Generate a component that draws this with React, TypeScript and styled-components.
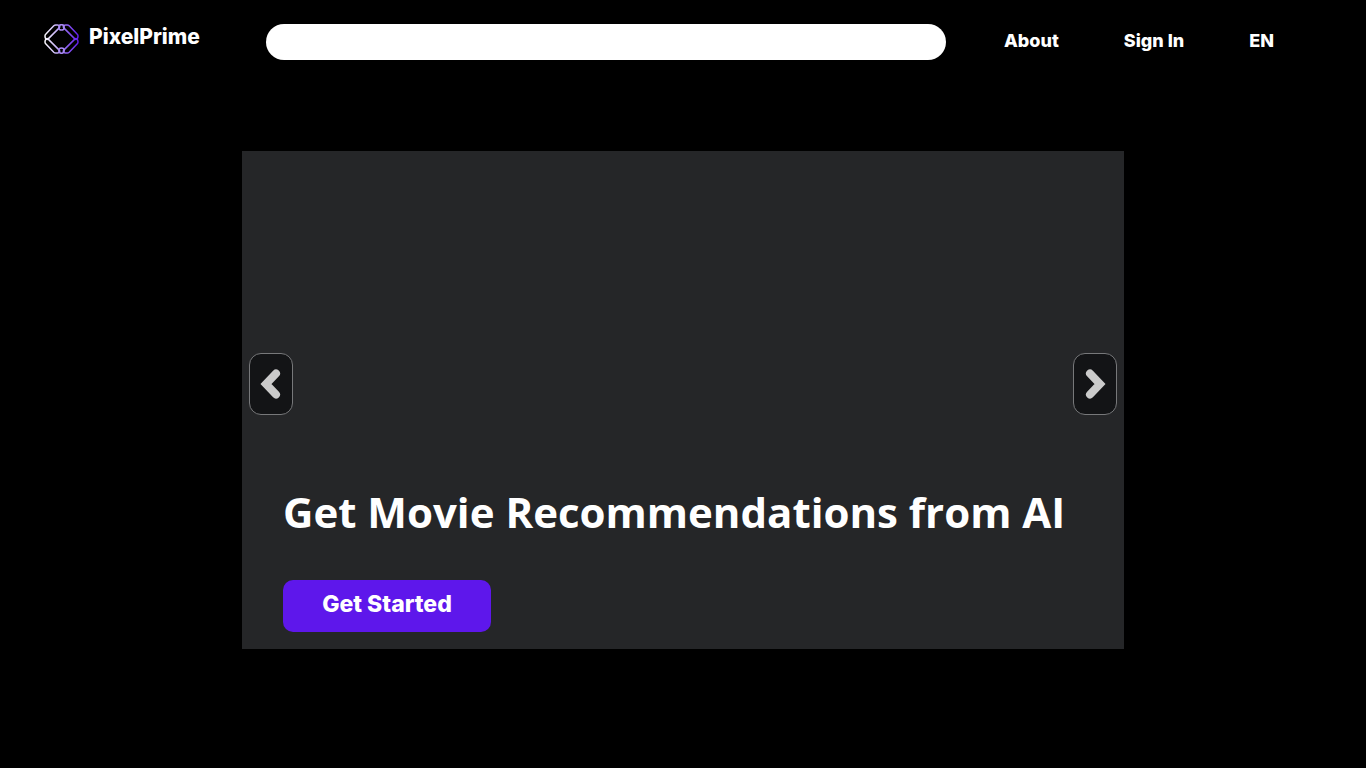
import React from "react";
import styled, { createGlobalStyle } from "styled-components";

const GlobalStyle = createGlobalStyle`
  *, *::before, *::after { box-sizing: border-box; }
  body {
    margin: 0;
    background: #000;
    color: #fff;
    font-family: Inter, "Liberation Sans", sans-serif;
  }
`;

const Header = styled.header`
  display: flex;
  align-items: center;
  padding: 24px 92px 0 44px;
`;

const Brand = styled.a`
  display: flex;
  align-items: flex-start;
  gap: 10px;
  width: 222px;
  height: 36px;
  color: #fff;
  text-decoration: none;
`;

const BrandName = styled.span`
  font-size: 21px;
  font-weight: 800;
  line-height: 26px;
`;

const Search = styled.input`
  flex: 1;
  min-width: 0;
  height: 36px;
  padding: 0 20px;
  border: 0;
  border-radius: 18px;
  background: #fff;
  color: #000;
  font: inherit;
  font-size: 16px;
`;

const Nav = styled.nav`
  display: flex;
  justify-content: space-between;
  width: 270px;
  margin-left: 58px;
  padding-bottom: 2px;
`;

const NavLink = styled.a`
  color: #fff;
  font-size: 18px;
  font-weight: 800;
  line-height: 24px;
  text-decoration: none;
  white-space: nowrap;
`;

const Stage = styled.main`
  display: flex;
  flex-direction: column;
  max-width: 882px;
  margin: 91px auto 0;
  padding: 202px 7px 17px;
  background: #252628;
`;

const Arrows = styled.div`
  display: flex;
  justify-content: space-between;
`;

const ArrowButton = styled.button`
  display: grid;
  place-items: center;
  width: 44px;
  height: 62px;
  padding: 0;
  border: 1px solid #77787a;
  border-radius: 12px;
  background: #131416;
  cursor: pointer;
`;

const Pitch = styled.section`
  padding: 69px 34px 0;
`;

const Title = styled.h1`
  margin: 0 0 40px;
  font-family: "Open Sans", "Noto Sans", sans-serif;
  font-size: 42px;
  font-weight: 700;
  line-height: 56px;
`;

const StartButton = styled.button`
  width: 208px;
  height: 52px;
  padding: 0 0 4px;
  border: 0;
  border-radius: 10px;
  background: #5e17eb;
  color: #fff;
  font: inherit;
  font-size: 23px;
  font-weight: 800;
  cursor: pointer;
`;

const link =
  "M1 12 Q1 11 1.7 10.3 L9.8 1.8 Q10.6 1 11.8 1 H13.5 Q15.3 1 15.7 2.3 Q15.9 3.2 15 4.1 L4.2 14.9 Q3 16 1.8 14.8 Q1 13.9 1 12 Z";

const Logo = () => (
  <svg width="35" height="30" viewBox="0 0 35 30" fill="none" aria-hidden="true">
    <defs>
      <linearGradient id="logoLeft" gradientUnits="userSpaceOnUse" x1="0" y1="0" x2="17" y2="0">
        <stop offset="0" stopColor="#fff" />
        <stop offset="1" stopColor="#b296f5" />
      </linearGradient>
      <linearGradient id="logoRight" gradientUnits="userSpaceOnUse" x1="17" y1="0" x2="0" y2="0">
        <stop offset="0" stopColor="#a27ff3" />
        <stop offset="1" stopColor="#5e17eb" />
      </linearGradient>
    </defs>
    <g strokeWidth="1.5" strokeLinejoin="round">
      <g stroke="url(#logoLeft)">
        <path d={link} />
        <path d={link} transform="matrix(1 0 0 -1 0 30)" />
      </g>
      <g stroke="url(#logoRight)">
        <path d={link} transform="matrix(-1 0 0 1 35 0)" />
        <path d={link} transform="matrix(-1 0 0 -1 35 30)" />
      </g>
      <g stroke="#a888f4">
        <circle cx="17.5" cy="3.4" r="2.7" />
        <circle cx="17.5" cy="26.6" r="2.7" />
      </g>
    </g>
  </svg>
);

const Chevron = ({ points }: { points: string }) => (
  <svg width="22" height="30" viewBox="0 0 22 30" aria-hidden="true">
    <polyline points={points} fill="none" stroke="#cbcbcb" strokeWidth="8" strokeLinecap="round" strokeLinejoin="miter" />
  </svg>
);

export default function App() {
  return (
    <>
      <GlobalStyle />
      <Header>
        <Brand href="#">
          <Logo />
          <BrandName>PixelPrime</BrandName>
        </Brand>
        <Search type="search" aria-label="Search" />
        <Nav>
          <NavLink href="#about">About</NavLink>
          <NavLink href="#signin">Sign In</NavLink>
          <NavLink href="#language">EN</NavLink>
        </Nav>
      </Header>
      <Stage>
        <Arrows>
          <ArrowButton type="button" aria-label="Previous">
            <Chevron points="16,4.5 6,15 16,25.5" />
          </ArrowButton>
          <ArrowButton type="button" aria-label="Next">
            <Chevron points="6,4.5 16,15 6,25.5" />
          </ArrowButton>
        </Arrows>
        <Pitch>
          <Title>Get Movie Recommendations from AI</Title>
          <StartButton type="button">Get Started</StartButton>
        </Pitch>
      </Stage>
    </>
  );
}
